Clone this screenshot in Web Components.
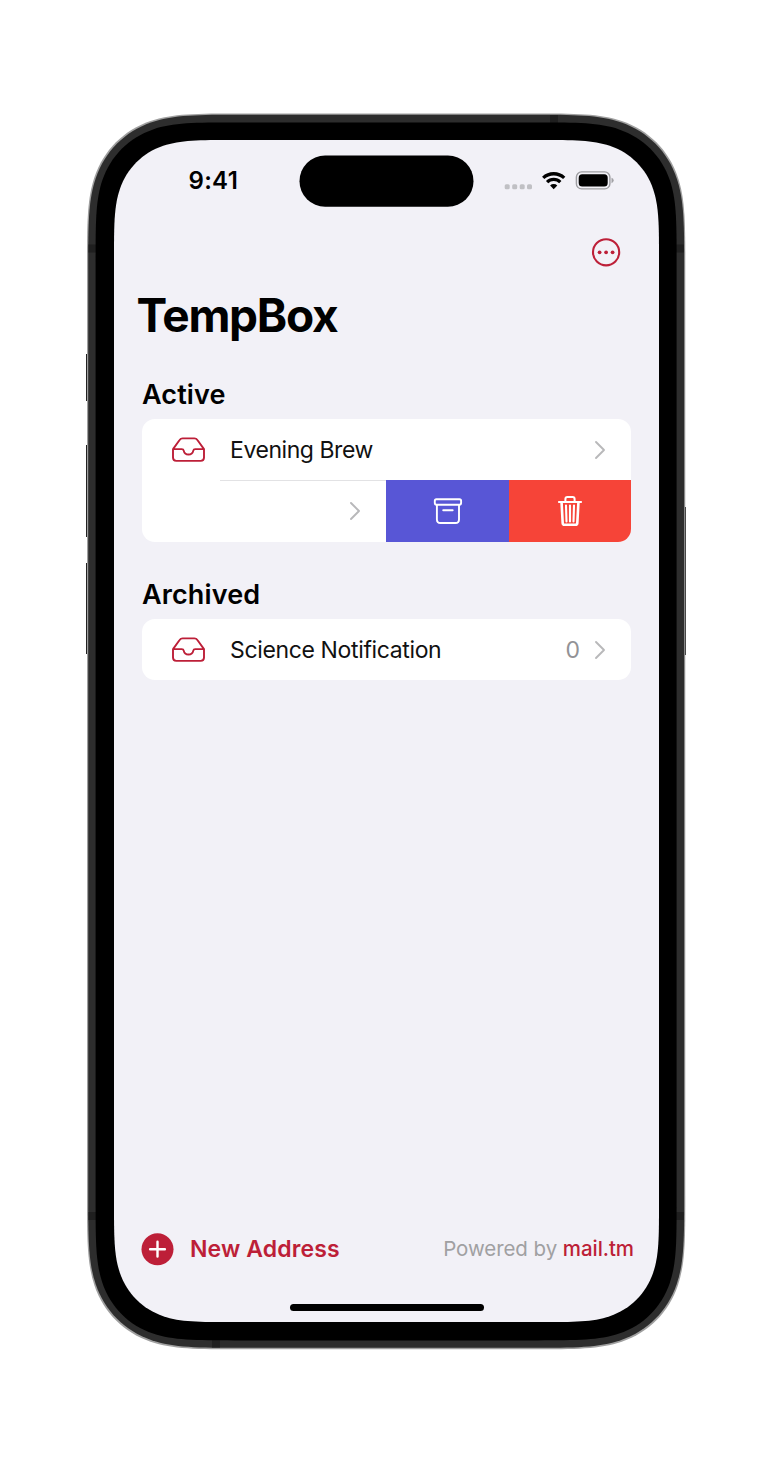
<!DOCTYPE html>
<html lang="en">
<head>
<meta charset="utf-8">
<title>TempBox</title>
<style>
body { margin: 0; background: #fff; font-family: Inter, "Liberation Sans", sans-serif; color: #000; }
</style>
</head>
<body>
<phone-frame>
  <status-bar></status-bar>
  <app-header heading="TempBox"></app-header>
  <mail-section heading="Active" style="--gap-top:34.5px">
    <mail-row style="--ls:-.44px">Evening Brew</mail-row>
    <swiped-row></swiped-row>
  </mail-section>
  <mail-section heading="Archived" style="--gap-top:36px">
    <mail-row count="0" style="--ls:-.36px">Science Notification</mail-row>
  </mail-section>
  <app-footer></app-footer>
</phone-frame>
<script>
const define = (name, html, init) => {
  const t = document.createElement('template');
  t.innerHTML = html;
  customElements.define(name, class extends HTMLElement {
    constructor() {
      super();
      this.attachShadow({ mode: 'open' }).appendChild(t.content.cloneNode(true));
    }
    connectedCallback() { if (init) init(this, this.shadowRoot); }
  });
};

// Rounded rectangle with continuous-curvature corners
const smoothRect = (x, y, w, h, r) => {
  const a = 1.52866 * r, b = 1.08849 * r, c = .852 * r, d = .63149 * r, e = .07491 * r, f = .365 * r, g = .1655 * r;
  const X = x + w, Y = y + h;
  return `M${x + a} ${y}H${X - a}C${X - b} ${y} ${X - c} ${y} ${X - d} ${y + e}C${X - f} ${y + g} ${X - g} ${y + f} ${X - e} ${y + d}C${X} ${y + c} ${X} ${y + b} ${X} ${y + a}` +
    `V${Y - a}C${X} ${Y - b} ${X} ${Y - c} ${X - e} ${Y - d}C${X - g} ${Y - f} ${X - f} ${Y - g} ${X - d} ${Y - e}C${X - c} ${Y} ${X - b} ${Y} ${X - a} ${Y}` +
    `H${x + a}C${x + b} ${Y} ${x + c} ${Y} ${x + d} ${Y - e}C${x + f} ${Y - g} ${x + g} ${Y - f} ${x + e} ${Y - d}C${x} ${Y - c} ${x} ${Y - b} ${x} ${Y - a}` +
    `V${y + a}C${x} ${y + b} ${x} ${y + c} ${x + e} ${y + d}C${x + g} ${y + f} ${x + f} ${y + g} ${x + d} ${y + e}C${x + c} ${y} ${x + b} ${y} ${x + a} ${y}Z`;
};

define('phone-frame', `
<style>
:host { display: block; box-sizing: border-box; width: 771px; height: 1464px; padding: 140px 112px 142px 114px; position: relative; }
svg { position: absolute; inset: 0; }
.screen { position: relative; height: 1182px; display: flex; flex-direction: column; }
</style>
<svg width="771" height="1464" viewBox="0 0 771 1464">
  <g fill="#222"><rect x="86" y="354" width="3" height="47"/><rect x="86" y="445" width="3" height="92"/><rect x="86" y="563" width="3" height="91"/><rect x="683" y="507" width="3" height="148"/></g>
  <path id="rim" fill="#a0a0a0"/><path id="edge" fill="#2d2d2d"/>
  <g fill="#1f1f1f"><rect x="550" y="115" width="8" height="9"/><rect x="212" y="1339" width="8" height="8.500"/><rect x="88.500" y="244.500" width="9" height="8"/><rect x="675" y="244.500" width="8.800" height="8"/><rect x="88.500" y="1212" width="9" height="8"/><rect x="675" y="1212" width="8.800" height="8"/></g>
  <path id="bezel" fill="#000"/><path id="glass" fill="#f2f1f7"/>
</svg>
<div class="screen"><slot></slot></div>`, (el, root) => {
  const set = (id, ...a) => root.getElementById(id).setAttribute('d', smoothRect(...a));
  set('rim', 87, 113.5, 598.3, 1235.7, 100.5);
  set('edge', 88.2, 114.8, 596, 1233, 100.5);
  set('bezel', 95.6, 122.6, 581, 1217.800, 91);
  set('glass', 114, 140, 545, 1182, 78);
});

define('status-bar', `
<style>
:host { display: flex; align-items: flex-start; height: 84px; flex: none; }
.time { width: 111px; padding: 26px 0 0 74.500px; font-size: 24px; line-height: 29px; font-weight: 600; letter-spacing: .3px; }
.island { margin: 15px 0 0 -.5px; }
.icons { margin: 29px 0 0 28.500px; }
</style>
<div class="time">9:41</div>
<svg class="island" width="175" height="53" viewBox="299 155 175 53"><rect x="299.500" y="155.500" width="174" height="51.300" rx="25.650"/></svg>
<svg class="icons" width="112" height="24" viewBox="503 169 112 24">
  <g fill="#c0c0c4"><rect x="504.700" y="184.200" width="5" height="5" rx="1.500"/><rect x="512.200" y="184.200" width="5" height="5" rx="1.500"/><rect x="519.700" y="184.200" width="5" height="5" rx="1.500"/><rect x="527" y="184.200" width="5" height="5" rx="1.500"/></g>
  <g fill="none" stroke="#000" stroke-width="3.300"><path d="M543.200 177.900A15.300 15.300 0 0 1 564.200 177.900"/><path d="M547.100 182.100A9.500 9.500 0 0 1 560.300 182.100"/></g>
  <path d="M553.700 189.200l-3.600-3.700a5.200 5.200 0 0 1 7.200 0z"/>
  <rect x="576.400" y="171.900" width="33.500" height="17" rx="5.200" fill="none" stroke="#9d9da1" stroke-width="1.400"/>
  <rect x="578.700" y="174.200" width="29" height="12.400" rx="3.500"/>
  <path d="M611.500 177.800q2.200.8 2.200 2.700t-2.200 2.700z" fill="#a2a2a6"/>
</svg>`);

define('app-header', `
<style>
:host { display: block; flex: none; }
.tools { display: flex; justify-content: flex-end; padding: 12px 37px 0 0; height: 47px; }
h1 { margin: 4px 0 0 22.500px; font-size: 46px; line-height: 56px; font-weight: 700; letter-spacing: -1.300px; }
</style>
<div class="tools"><svg width="32" height="32" viewBox="590 236 32 32"><circle cx="606.100" cy="252.300" r="13.100" fill="none" stroke="#bd1f38" stroke-width="2.100"/><g fill="#bd1f38"><circle cx="599.600" cy="252.300" r="1.900"/><circle cx="606.100" cy="252.300" r="1.900"/><circle cx="612.600" cy="252.300" r="1.900"/></g></svg></div>
<h1></h1>`, (el, root) => { root.querySelector('h1').textContent = el.getAttribute('heading'); });

define('mail-section', `
<style>
:host { display: block; flex: none; margin: var(--gap-top) 28px 0; }
h2 { margin: 0; font-size: 27px; line-height: 34px; font-weight: 600; letter-spacing: .12px; padding-bottom: 7.500px; }
.card { background: #fff; border-radius: 13px; overflow: hidden; }
</style>
<h2></h2><div class="card"><slot></slot></div>`, (el, root) => { root.querySelector('h2').textContent = el.getAttribute('heading'); });

define('row-chevron', `
<style>:host { display: block; width: 12px; height: 20px; } svg { display: block; }</style>
<svg width="12" height="20" viewBox="0 0 12 20"><path d="M2 2l8 8-8 8" fill="none" stroke="#b8b8ba" stroke-width="1.900" stroke-linecap="round" stroke-linejoin="round"/></svg>`);

define('mail-row', `
<style>
:host { display: flex; align-items: center; height: 61px; box-sizing: border-box; padding: 0 25px 0 29px; }
.label { flex: 1; margin-left: 24px; font-size: 23px; line-height: 30px; color: #111; letter-spacing: var(--ls); }
.count { font-size: 23px; color: #929296; margin-right: 14px; }
</style>
<svg width="35" height="26" viewBox="0 .4 35 26" fill="none" stroke="#bd1f38" stroke-width="1.900" stroke-linejoin="round"><path d="M2 12.500L8.600 3.400Q9.700 1.800 11.600 1.800H23.400Q25.300 1.800 26.400 3.400L33 12.500V21Q33 24.300 29.700 24.300H5.300Q2 24.300 2 21V12.500H10.800Q12.400 12.500 12.700 14A4.900 4.900 0 0 0 22.300 14Q22.600 12.500 24.200 12.500H33"/></svg>
<div class="label"><slot></slot></div><div class="count"></div><row-chevron></row-chevron>`, (el, root) => {
  root.querySelector('.count').textContent = el.getAttribute('count') || '';
});

define('swiped-row', `
<style>
:host { display: flex; height: 61.500px; }
.content { flex: 1; display: flex; align-items: center; justify-content: flex-end; padding-right: 25.500px; margin-left: 78px; border-top: 1px solid #e2e2e4; box-sizing: border-box; }
.action { width: 122.300px; display: flex; align-items: center; justify-content: center; }
.archive { background: #5856d6; } .delete { background: #f64438; }
</style>
<div class="content"><row-chevron></row-chevron></div>
<div class="action archive"><svg width="30" height="30" viewBox="433 496 30 30" fill="none" stroke="#fff" stroke-width="1.900" stroke-linejoin="round" stroke-linecap="round"><rect x="434.800" y="499.200" width="26.300" height="5.500" rx="1.600"/><path d="M436.900 504.900V519.500Q436.900 523 440.400 523H455.500Q459 523 459 519.500V504.900M443.200 510.200H452.700"/></svg></div>
<div class="action delete"><svg width="30" height="34" viewBox="555 494 30 34" fill="none" stroke="#fff" stroke-linejoin="round" stroke-linecap="round"><path stroke-width="2" d="M558.900 502H581.100M565.400 501.500V499Q565.400 497 567.400 497H572.600Q574.600 497 574.600 499V501.500"/><path stroke-width="2.600" d="M561.600 503L562.700 523.200Q562.800 524.800 564.400 524.800H575.600Q577.200 524.800 577.300 523.200L578.400 503"/><path stroke-width="2.100" d="M566 505.500L566.500 521.500M570 505.500V521.500M574 505.500L573.500 521.500"/></svg></div>`);

define('app-footer', `
<style>
:host { display: block; margin-top: auto; flex: none; }
.bar { display: flex; align-items: center; height: 34px; padding: 0 25px 0 27px; }
.new { margin: -1px 0 0 16px; font-size: 23px; font-weight: 600; color: #bd1f38; letter-spacing: .12px; }
.by { margin: -1px 0 0 auto; font-size: 20.500px; color: #a0a0a2; letter-spacing: -.06px; }
.by span { color: #bd1f38; font-weight: 500; }
.home { width: 194.500px; height: 7px; border-radius: 4px; background: #000; margin: 37.300px auto 11.500px 175.500px; }
</style>
<div class="bar"><svg width="33" height="34" viewBox="0 0 33 34"><circle cx="16.500" cy="17.200" r="16" fill="#bd1f38"/><path d="M16.500 9.800v14.800M9.100 17.200h14.800" stroke="#fff" stroke-width="2.400" stroke-linecap="round"/></svg>
<div class="new">New Address</div><div class="by">Powered by <span>mail.tm</span></div></div>
<div class="home"></div>`);
</script>
</body>
</html>
